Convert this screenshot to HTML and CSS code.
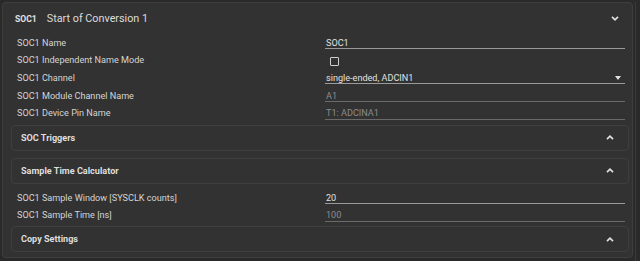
FILE: index.html
```
<!DOCTYPE html>
<html lang="en">
  <head>
    <meta charset="UTF-8" />
    <title>SOC1</title>
    <link rel="stylesheet" href="styles.css">
  </head>
  <body>
    <div class="wrap">
      <section class="panel">
        <header class="panel-head">
          <span class="tag">SOC1</span>
          <span class="title">Start of Conversion 1</span>
          <svg class="chev" width="8" height="5" viewBox="0 0 8 5"><path d="M1 0.8 L4 3.8 L7 0.8" fill="none" stroke="#e0e0e0" stroke-width="1.7"/></svg>
        </header>

        <div class="row">
          <label>SOC1 Name</label>
          <div class="field edit"><span>SOC1</span></div>
        </div>
        <div class="row">
          <label>SOC1 Independent Name Mode</label>
          <div class="field plain"><span class="check"></span></div>
        </div>
        <div class="row">
          <label>SOC1 Channel</label>
          <div class="field edit"><span>single-ended, ADCIN1</span><span class="drop"></span></div>
        </div>
        <div class="row">
          <label>SOC1 Module Channel Name</label>
          <div class="field ro"><span>A1</span></div>
        </div>
        <div class="row">
          <label>SOC1 Device Pin Name</label>
          <div class="field ro"><span>T1: ADCINA1</span></div>
        </div>

        <div class="sub">
          <span>SOC Triggers</span>
          <svg class="chev" width="8" height="5" viewBox="0 0 8 5"><path d="M1 4.2 L4 1.2 L7 4.2" fill="none" stroke="#e0e0e0" stroke-width="1.7"/></svg>
        </div>
        <div class="sub open">
          <span>Sample Time Calculator</span>
          <svg class="chev" width="8" height="5" viewBox="0 0 8 5"><path d="M1 4.2 L4 1.2 L7 4.2" fill="none" stroke="#e0e0e0" stroke-width="1.7"/></svg>
        </div>

        <div class="row">
          <label>SOC1 Sample Window [SYSCLK counts]</label>
          <div class="field edit"><span>20</span></div>
        </div>
        <div class="row">
          <label>SOC1 Sample Time [ns]</label>
          <div class="field ro"><span>100</span></div>
        </div>

        <div class="sub">
          <span>Copy Settings</span>
          <svg class="chev" width="8" height="5" viewBox="0 0 8 5"><path d="M1 4.2 L4 1.2 L7 4.2" fill="none" stroke="#e0e0e0" stroke-width="1.7"/></svg>
        </div>
      </section>
      <div class="scroll"></div>
    </div>
  </body>
</html>
```
FILE: styles.css
```
body {
  margin: 0;
  background-color: #2a2a2a;
  font-family: Roboto, "Liberation Sans", sans-serif;
  color: #d6d6d6;
}

.wrap {
  display: flex;
  align-items: flex-start;
  height: 261px;
  padding: 2px 0 0 2px;
  box-sizing: border-box;
}

.panel {
  flex: 1;
  display: flex;
  flex-direction: column;
  box-sizing: border-box;
  background-color: #323232;
  border: 1px solid #3e3e3e;
  border-radius: 4px;
  padding: 0 3px 5px 8px;
}

.scroll {
  width: 4px;
  height: 100%;
  margin-left: 2px;
  border-left: 1px solid #3a3a3a;
}

.panel-head {
  display: flex;
  align-items: center;
  height: 31px;
  padding-left: 4px;
}

.tag {
  font-size: 8.6px;
  font-weight: bold;
  color: #e2e2e2;
}

.title {
  font-size: 10.8px;
  margin-left: 10px;
  color: #dcdcdc;
}

.panel-head .chev {
  margin-left: auto;
  margin-right: 10px;
}

.row {
  display: grid;
  grid-template-columns: 314px 300px;
  height: 17.6px;
  align-items: center;
  font-size: 9.1px;
}

.row label {
  padding-left: 6px;
  color: #d4d4d4;
}

.field {
  display: flex;
  align-items: center;
  height: 11px;
  margin-top: 1px;
  padding: 0 1px;
}

.field.edit {
  border-bottom: 1px solid #9a9a9a;
  color: #e0e0e0;
}

.field.ro {
  border-bottom: 1px solid #6a6a6a;
  color: #8c8c8c;
}

.check {
  width: 7px;
  height: 7px;
  margin-left: 4px;
  margin-top: 2px;
  border: 1.5px solid #d0d0d0;
  border-radius: 1px;
}

.drop {
  margin-left: auto;
  margin-right: 3px;
  border-left: 3.5px solid transparent;
  border-right: 3.5px solid transparent;
  border-top: 4px solid #e0e0e0;
}

.sub {
  display: flex;
  align-items: center;
  height: 26px;
  box-sizing: border-box;
  margin: 3px 0 4px;
  padding: 0 14px 0 9px;
  border: 1px solid #3f3f3f;
  border-radius: 4px;
  font-size: 9.1px;
  font-weight: bold;
  color: #dedede;
}

.sub.open {
  margin-bottom: 5px;
}

.sub:last-child {
  margin-top: 2px;
  margin-bottom: 0;
}

.sub .chev {
  margin-left: auto;
}
```
